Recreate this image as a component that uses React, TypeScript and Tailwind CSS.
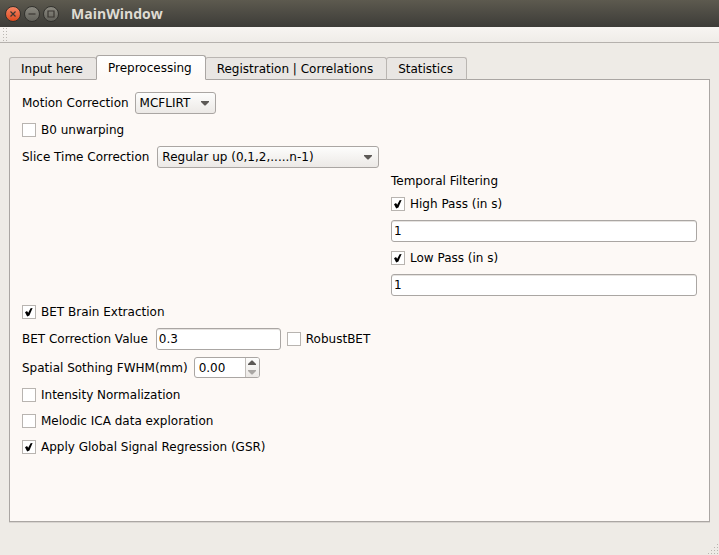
import { useId, useState } from "react";
import type { ReactNode } from "react";

const FIELD =
  "h-[22px] rounded-[3px] border border-[#aaa6a3] bg-white px-[2px] text-xs text-black outline-none shadow-[inset_0_1px_0_#e6e3e0]";

function WindowButton({ label, close, children }: { label: string; close?: boolean; children: ReactNode }) {
  return (
    <button
      type="button"
      aria-label={label}
      className={
        "flex size-4 items-center justify-center rounded-full border border-[#33322e] " +
        (close ? "bg-linear-to-b from-[#f58462] to-[#dd4a1b]" : "bg-linear-to-b from-[#8b8980] to-[#63625b]")
      }
    >
      <svg width="14" height="14" viewBox="0 0 14 14" fill="none" stroke="#3b3732" strokeWidth="1.2">
        {children}
      </svg>
    </button>
  );
}

function Check({ label, defaultChecked = false }: { label: string; defaultChecked?: boolean }) {
  return (
    <label className="flex w-fit items-center gap-[5px]">
      <span className="relative flex size-[14px]">
        <input
          type="checkbox"
          defaultChecked={defaultChecked}
          className="peer size-[14px] appearance-none border border-[#b8b4b0] bg-white"
        />
        <svg
          viewBox="0 0 14 14"
          className="pointer-events-none absolute inset-0 hidden size-[14px] peer-checked:block"
          fill="#000"
        >
          <path d="M3 7.2 5 6 6.2 7.8 8.6 3.2 10.6 3 7.4 10.6 5.2 11.4Z" />
        </svg>
      </span>
      {label}
    </label>
  );
}

function Combo({ id, options, width }: { id: string; options: string[]; width: string }) {
  return (
    <span className={"relative flex " + width}>
      <select
        id={id}
        className="h-[22px] w-full appearance-none rounded-[3px] border border-[#aaa6a3] bg-linear-to-b from-[#fdfdfc] to-[#ece9e6] pr-5 pl-1 text-xs text-black outline-none"
      >
        {options.map((o) => (
          <option key={o}>{o}</option>
        ))}
      </select>
      <svg width="8" height="5" viewBox="0 0 8 5" className="pointer-events-none absolute top-[9px] right-[7px]">
        <path d="M0 0H8V1L4.5 4.5H3.5L0 1Z" fill="#5c5956" />
      </svg>
    </span>
  );
}

function FilterField({ label }: { label: string }) {
  return (
    <div className="flex flex-col gap-2">
      <Check label={label} defaultChecked />
      <input type="text" aria-label={label} defaultValue="1" className={FIELD + " w-full"} />
    </div>
  );
}

function SpinBox({ id }: { id: string }) {
  const [value, setValue] = useState("0.00");
  const step = (d: number) => setValue(Math.max(0, (parseFloat(value) || 0) + d).toFixed(2));
  return (
    <span className="flex h-[21px] w-[66px] overflow-hidden rounded-[3px] border border-[#aaa6a3] bg-white">
      <input
        id={id}
        type="text"
        value={value}
        onChange={(e) => setValue(e.target.value)}
        className="min-w-0 flex-1 pl-1 text-xs text-black outline-none"
      />
      <span className="flex w-[14px] flex-col border-l border-[#c2beba] bg-linear-to-b from-[#fdfdfc] to-[#ece9e6]">
        <button type="button" aria-label="Increase" onClick={() => step(1)} className="flex flex-1 items-center justify-center">
          <svg width="8" height="5" viewBox="0 0 8 5">
            <path d="M0 5V4L3.5 0.5H4.5L8 4V5Z" fill="#5c5956" />
          </svg>
        </button>
        <button type="button" aria-label="Decrease" onClick={() => step(-1)} className="flex flex-1 items-center justify-center">
          <svg width="8" height="5" viewBox="0 0 8 5">
            <path d="M0 0H8V1L4.5 4.5H3.5L0 1Z" fill="#aaa7a4" />
          </svg>
        </button>
      </span>
    </span>
  );
}

const TABS = ["Input here", "Preprocessing", "Registration | Correlations", "Statistics"];

function Tabs({ active, onSelect }: { active: string; onSelect: (tab: string) => void }) {
  return (
    <div role="tablist" className="relative -mb-px flex items-end">
      {TABS.map((tab) => (
        <button
          key={tab}
          type="button"
          role="tab"
          aria-selected={tab === active}
          onClick={() => onSelect(tab)}
          className={
            "-mr-px rounded-t-[3px] border pr-[13px] pl-[11px] " +
            (tab === active
              ? "z-10 h-[25px] border-[#aaa6a3] border-b-[#fdf9f6] bg-linear-to-b from-white to-[#fdf9f6]"
              : "h-[23px] border-[#bab6b2] border-b-[#aaa6a3] bg-[#e9e6e3]")
          }
        >
          {tab}
        </button>
      ))}
    </div>
  );
}

export default function App() {
  const [tab, setTab] = useState("Preprocessing");
  const id = useId();
  return (
    <div className="flex min-h-screen flex-col bg-[#eeebe6] font-['DejaVu_Sans',sans-serif] text-xs leading-4 text-black">
      <header className="flex h-[27px] items-center gap-[3px] bg-linear-to-b from-[#5d5a4f] to-[#3d3c38] pl-[5px]">
        <WindowButton label="Close" close>
          <path d="M4.5 4.5 9.5 9.5M9.5 4.5 4.5 9.5" />
        </WindowButton>
        <WindowButton label="Minimize">
          <path d="M3.5 7H10.5" />
        </WindowButton>
        <WindowButton label="Maximize">
          <path d="M4 4H10V10H4Z" />
        </WindowButton>
        <h1 className="pl-[9px] font-['Open_Sans',sans-serif] text-sm font-bold text-[#dfdbd2]">MainWindow</h1>
      </header>

      <div className="flex h-4 border-b border-[#b5b1ad] bg-linear-to-b from-[#f8f5f2] to-[#efece8] pl-[3px]">
        <svg width="5" height="15" viewBox="0 0 5 15" fill="#bbb7b2">
          {[1, 4, 7, 10, 13].map((y) => (
            <g key={y}>
              <rect x="0" y={y} width="1" height="1" />
              <rect x="3" y={y} width="1" height="1" />
            </g>
          ))}
        </svg>
      </div>

      <main className="flex flex-1 flex-col px-[9px] pt-3">
        <Tabs active={tab} onSelect={setTab} />
        <section
          role="tabpanel"
          aria-label={tab}
          className="flex flex-1 flex-col border border-[#aaa6a3] bg-[#fdf9f6] p-3 shadow-[0_1px_0_#d8d4d0]"
        >
          <div className="flex flex-col gap-[5px]">
            <div className="flex h-[22px] items-center gap-[6px]">
              <label htmlFor={id + "motion"}>Motion Correction</label>
              <Combo id={id + "motion"} options={["MCFLIRT", "None"]} width="w-[81px]" />
            </div>
            <div className="flex h-[22px] items-center">
              <Check label="B0 unwarping" />
            </div>
            <div className="flex h-[22px] items-center gap-2">
              <label htmlFor={id + "slice"}>Slice Time Correction</label>
              <Combo id={id + "slice"} options={["Regular up (0,1,2,.....n-1)", "Regular down"]} width="w-[222px]" />
            </div>
          </div>

          <fieldset className="mt-[5px] ml-[369px] flex flex-col gap-2">
            <legend className="mb-[7px]">Temporal Filtering</legend>
            <FilterField label="High Pass (in s)" />
            <FilterField label="Low Pass (in s)" />
          </fieldset>

          <div className="mt-[5px] flex flex-col gap-[5px]">
            <div className="flex h-[22px] items-center">
              <Check label="BET Brain Extraction" defaultChecked />
            </div>
            <div className="flex h-[22px] items-center gap-[6px]">
              <label htmlFor={id + "bet"} className="pr-[2px]">
                BET Correction Value
              </label>
              <input id={id + "bet"} type="text" defaultValue="0.3" className={FIELD + " w-[125px]"} />
              <Check label="RobustBET" />
            </div>
          </div>
          <div className="mt-[7px] flex items-center gap-[6px]">
            <label htmlFor={id + "fwhm"}>Spatial Sothing FWHM(mm)</label>
            <SpinBox id={id + "fwhm"} />
          </div>
          <div className="mt-[9px] flex flex-col gap-[10px]">
            <Check label="Intensity Normalization" />
            <Check label="Melodic ICA data exploration" />
            <Check label="Apply Global Signal Regression (GSR)" defaultChecked />
          </div>
        </section>
      </main>

      <footer className="flex h-[33px] items-end justify-end">
        <svg width="11" height="11" viewBox="0 0 11 11" fill="#bab6b1">
          {[0, 1, 2, 3].map((r) =>
            Array.from({ length: r + 1 }, (_, c) => (
              <rect key={r + "-" + c} x={9 - c * 3} y={r * 3} width="1" height="1" />
            )),
          )}
        </svg>
      </footer>
    </div>
  );
}
